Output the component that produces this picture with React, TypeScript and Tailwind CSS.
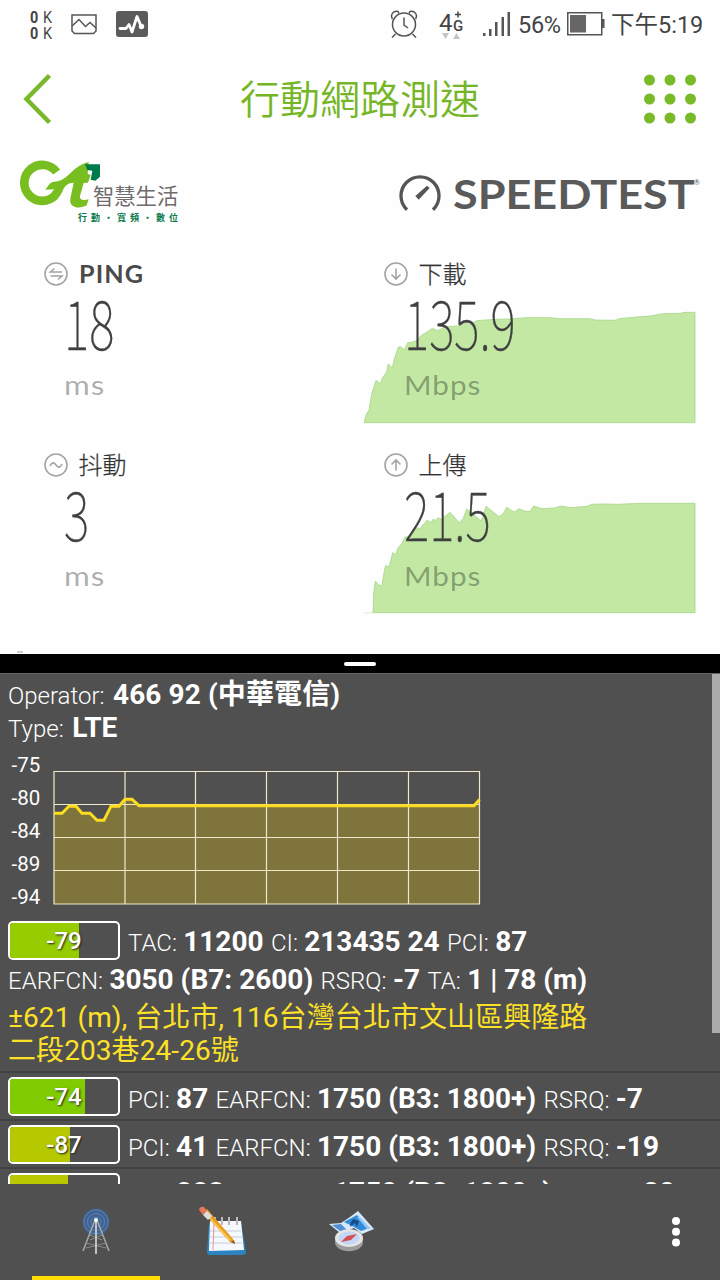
import React from "react";

const roboto = "font-['Roboto','Noto_Sans_CJK_TC',sans-serif]";
const cjk = "font-['Noto_Sans_CJK_TC',sans-serif]";
const lato = "font-['Lato',sans-serif]";

function StatusBar() {
  return (
    <div className={`${roboto} flex h-12 items-center text-[#444]`}>
      <div className="ml-[30px] flex h-[32px] w-[24px] flex-col justify-center pt-[3px] text-[16px] leading-[15.5px]">
        <div className="flex gap-[5px]"><b className="w-[8px] origin-left scale-x-90 font-bold">0</b><span className="origin-left scale-x-90">K</span></div>
        <div className="flex gap-[5px]"><b className="w-[8px] origin-left scale-x-90 font-bold">0</b><span className="origin-left scale-x-90">K</span></div>
      </div>
      <svg className="ml-[16px]" width="28" height="22" viewBox="0 0 28 22" fill="none" stroke="#555" strokeWidth="1.5">
        <path d="M2 2H26V18L23.500 20.500H4.500L2 18Z" />
        <path d="M2 13L9 6.500L15.500 13.500L20 9.500L26 15" />
      </svg>
      <svg className="ml-[18px]" width="32" height="26" viewBox="0 0 32 26">
        <rect x="0" y="0" width="32" height="26" rx="3" fill="#5b5b5b" />
        <path d="M4 17.500H10L13 13.500L16 21L21 5.500L25 15" fill="none" stroke="#fff" strokeWidth="2.800" strokeLinejoin="round" strokeLinecap="round" />
        <circle cx="25.500" cy="15.500" r="2.700" fill="#fff" />
      </svg>
      <svg className="ml-[242px]" width="28" height="30" viewBox="0 0 28 30" fill="none" stroke="#555" strokeWidth="1.500">
        <circle cx="14" cy="15.500" r="11.500" />
        <path d="M14 8.500V16L18 19M2.500 10C0 6 3 1.500 8 2.500L9 4.500M25.500 10C28 6 25 1.500 20 2.500L19 4.500M5.500 25L2 28.500M22.500 25L26 28.500" />
      </svg>
      <div className="ml-[21px] flex h-[32px] w-[26px] flex-col">
        <div className="flex h-[23px]">
          <span className="w-[14px] text-[24px] leading-[30px]">4</span>
          <span className="flex flex-col items-center pt-[3px] text-[15px] leading-[14px]">
            <svg width="8" height="8" viewBox="0 0 8 8" stroke="#444" strokeWidth="1.500" className="shrink-0"><path d="M1 3.500H7M4 .5V6.500" /></svg>
            <b className="font-medium">G</b>
          </span>
        </div>
        <svg width="20" height="7" viewBox="0 0 20 7" className="mt-[2px] ml-[3px]" fill="#c4c4c4"><path d="M0 0H7L3.500 6ZM11 6H18L14.500 0Z" /></svg>
      </div>
      <svg className="ml-[18px]" width="28" height="25" viewBox="0 0 28 25" fill="#555">
        <path d="M0 21H2.500V24H0ZM6 17H8.500V24H6ZM12 10H14.500V24H12ZM18.500 5H21V24H18.500ZM24.500 0H27V24H24.500Z" />
      </svg>
      <span className="ml-[7px] w-[43px] pt-[2px] text-[23.500px] leading-[48px] tracking-[-0.3px]">56%</span>
      <svg className="ml-[6px]" width="38" height="24" viewBox="0 0 38 24">
        <rect x=".75" y=".75" width="34" height="22" fill="none" stroke="#555" strokeWidth="1.500" />
        <path d="M35 7H37.500V16H35Z" fill="#555" />
        <rect x="3" y="3" width="16" height="17.500" fill="#666" />
      </svg>
      <span className="ml-[6px] whitespace-nowrap pt-[2px] text-[23.500px] leading-[48px]">下午5:19</span>
    </div>
  );
}

function Header() {
  return (
    <div className="flex h-[102px] items-center">
      <svg className="ml-[22px]" width="32" height="52" viewBox="0 0 32 52" fill="none" stroke="#78b82a" strokeWidth="4.500">
        <path d="M27.500 2.500L4.500 26L27.500 49.500" />
      </svg>
      <h1 className={`${cjk} -mt-[4px] ml-[186px] w-[240px] whitespace-nowrap text-[40px] font-[350] leading-[60px] text-[#75b626]`}>行動網路測速</h1>
      <svg className="ml-[162px]" width="56" height="54" viewBox="0 0 56 54" fill="#78ba27">
        {[7.5, 28, 48.5].map((x) => [8, 27, 46].map((y) => <circle key={`${x}-${y}`} cx={x} cy={y} r="5.500" />))}
      </svg>
    </div>
  );
}

function Brands() {
  return (
    <div className="flex h-[100px] items-start pt-[10px]">
      <svg className="ml-[18px]" width="84" height="52" viewBox="54 30 252 156" fill="none">
        <path d="M170 66A54 54 0 1 0 166 136" stroke="#78be20" strokeWidth="26" />
        <path d="M136 119L149 101C160 92 175 97 188 88C214 73 224 46 266 36L263 72L272 75L264 98L251 99L240 138C238 150 250 152 266 148L260 166C240 178 206 174 211 146L221 98C204 98 194 108 189 120C184 132 180 138 174 145L155 127L163 118Z" fill="#78be20" />
        <path d="M255 43H300V80L286 92L272 89L277 62L262 60Z" fill="#007a4b" />
      </svg>
      <div className={`${cjk} -ml-[9px] w-[100px] pt-[20px]`}>
        <div className="whitespace-nowrap text-[21.300px] font-normal leading-[30px] text-[#6f6a6b]">智慧生活</div>
        <div className="-ml-[15px] mt-px flex w-[100px] justify-between text-[9px] font-bold leading-[14px] text-[#087a4d]">
          <span>行</span><span>動</span><span>·</span><span>寬</span><span>頻</span><span>·</span><span>數</span><span>位</span>
        </div>
      </div>
      <svg className="ml-[206px] mt-[13px]" width="43" height="38" viewBox="0 0 129 114" fill="none" stroke="#555">
        <path d="M24 110A57 57 0 1 1 102 110" stroke="#555" strokeWidth="10" />
        <path d="M59 80L49 69L84 38L92 45Z" fill="#555" stroke="none" />
      </svg>
      <div className={`${lato} ml-[11px] mt-[10px] flex text-[#5a5a5a]`}>
        <div className="w-[241px]">
          <span className="inline-block origin-left scale-x-[1.110] text-[40.500px] font-bold leading-[48px]">SPEEDTEST</span>
        </div>
        <span className="text-[7px] leading-[24px]">®</span>
      </div>
    </div>
  );
}

type Kind = "ping" | "jitter" | "down" | "up";

const glyphs: Record<Kind, string> = {
  ping: "M18 10H6.500L10.500 6.500M6.500 14H18L14 17.500",
  jitter: "M6 13C8 9 10 9 12 12S16 15 18 11",
  down: "M12 6.500V17M7.500 12.500L12 17L16.500 12.500",
  up: "M12 17.500V7M7.500 11.500L12 7L16.500 11.500",
};

function Metric({ kind, label, value, unit }: { kind: Kind; label: string; value: string; unit: string }) {
  return (
    <div>
      <div className="flex h-[35px] items-center">
        <svg width="24" height="24" viewBox="0 0 24 24" fill="none" stroke="#a3a3a3" strokeWidth="1.600">
          <circle cx="12" cy="12" r="11" />
          <path d={glyphs[kind]} />
        </svg>
        {kind === "ping" ? (
          <span className={`${lato} ml-[11px] origin-left scale-x-105 text-[24px] font-bold leading-[35px] tracking-[1px] text-[#4a4a4a]`}>{label}</span>
        ) : (
          <span className={`${cjk} -mt-[3px] ml-[10.500px] text-[24px] font-light leading-[35px] text-[#333] [-webkit-text-stroke:0.25px_#333]`}>{label}</span>
        )}
      </div>
      <div className={`${cjk} ml-[20px] h-[60px] w-max origin-left scale-x-[0.710] text-[68px] font-thin leading-[60px] text-[#3f3f3f] [-webkit-text-stroke:0.4px_#3f3f3f]`}>{value}</div>
      <div className={`${lato} ml-[20px] mt-[10px] w-max origin-left text-[27.500px] leading-[48px] tracking-[0.900px] text-[#000]/33 ${unit === "ms" ? "scale-x-[1.140]" : "scale-x-[1.080]"}`}>{unit}</div>
    </div>
  );
}

const downPath =
  "M42 518L49 493L57 480L61 455L66 429L78 391L86 397L92 401L97 384L110 366L114 342L127 353L134 323L145 291L152 290L163 299L173 278L185 277L200 272L215 255L231 246L247 235L263 242L275 236L281 230L325 228L345 219L362 224L380 212L435 208L480 207L528 203L600 203L630 206L720 206L735 210L795 211L808 206L850 202L900 198L940 191L990 190L1005 187L1035 187V518Z";
const upPath =
  "M69 518L71 460L76 423L85 434L96 438L99 415L105 382L108 376L117 382L128 338L137 344L144 323L155 312L165 291L175 290L202 264L210 266L223 250L232 240L243 248L249 238L257 241L264 233L274 238L300 217L328 248L340 235L350 207L370 222L393 243L400 227L408 199L447 230L460 221L470 202L492 216L508 206L525 214L540 214L551 198L576 206L613 204L634 198L660 203L712 199L725 193L765 192L805 193L870 190H1035V518Z";

function AreaChart({ d, upload = false }: { d: string; upload?: boolean }) {
  return (
    <svg width="370" height="190" viewBox="0 0 1110 570" className="col-start-1 row-start-1">
      {upload && <path d="M42 519H70" stroke="#d9efc9" strokeWidth="3" />}
      <path d={d} fill="#c2e8a3" stroke="#a8d78c" strokeWidth="2.500" />
    </svg>
  );
}

function Results() {
  return (
    <div className="grid grid-cols-[350px_370px] grid-rows-[190px_213px]">
      <div className="pt-[6px] pl-[44px]"><Metric kind="ping" label="PING" value="18" unit="ms" /></div>
      <div className="grid items-start">
        <AreaChart d={downPath} />
        <div className="z-10 col-start-1 row-start-1 pt-[6px] pl-[34px]"><Metric kind="down" label="下載" value="135.9" unit="Mbps" /></div>
      </div>
      <div className="pt-[7px] pl-[44px]"><Metric kind="jitter" label="抖動" value="3" unit="ms" /></div>
      <div className="grid items-start">
        <AreaChart d={upPath} upload />
        <div className="z-10 col-start-1 row-start-1 pt-[7px] pl-[34px]"><Metric kind="up" label="上傳" value="21.5" unit="Mbps" /></div>
      </div>
    </div>
  );
}

function Field({ name, wide = false, children }: { name: string; wide?: boolean; children: React.ReactNode }) {
  return (
    <>
      <span className="text-[24px] font-light leading-none">{name}:</span>
      <b className={wide ? "ml-[1.500px] font-bold" : "-ml-[0.700px] font-bold"}> {children}</b>
      <span className="mr-[1.500px] text-[24px] font-light leading-none"> </span>
    </>
  );
}

function Badge({ value, fill, color }: { value: string; fill: number; color: string }) {
  return (
    <div className="grid h-[39px] w-[112px] shrink-0 overflow-hidden rounded-[5px] border-2 border-white">
      <div className="col-start-1 row-start-1 h-full" style={{ width: fill, background: color }} />
      <span className="col-start-1 row-start-1 text-center text-[24px] font-medium leading-[37px] [text-shadow:1px_1px_2px_#222]">{value}</span>
    </div>
  );
}

function SignalChart() {
  return (
    <div className="flex h-[170px]">
      <div className="w-[50px] pt-[5px] pl-[11.500px] text-[20.500px] leading-[33.100px]">
        {["-75", "-80", "-84", "-89", "-94"].map((v) => <div key={v}>{v}</div>)}
      </div>
      <svg width="434" height="166" viewBox="50 744 434 166" fill="none">
        <path d="M54 813.200H62L69 806.200H76L82 813.200H90L97 820.200H104L111 806.200H119L125 799.200H132L139 805.700H474L479.500 799.500V904H54Z" fill="#7e743c" />
        <path d="M54 771.500H479.500V904H54ZM54 804.500H479.500M54 837.500H479.500M54 870.500H479.500M125 771.500V904M195.500 771.500V904M266.500 771.500V904M337.500 771.500V904M408.500 771.500V904" stroke="#eee9c8" strokeWidth="1.200" />
        <path d="M54 813.200H62L69 806.200H76L82 813.200H90L97 820.200H104L111 806.200H119L125 799.200H132L139 805.700H474L479.500 799.500" stroke="#fddc1f" strokeWidth="3" />
      </svg>
    </div>
  );
}

const neighbours = [
  { dbm: "-74", fill: 75, color: "#80cc00", pci: "87", rsrq: "-7" },
  { dbm: "-87", fill: 60, color: "#b5c800", pci: "41", rsrq: "-19" },
  { dbm: "-88", fill: 58, color: "#b9c800", pci: "283", rsrq: "-20" },
];

function CellInfo() {
  return (
    <div className={`${roboto} relative h-[511px] overflow-hidden border-t border-[#656565] bg-[#505050] text-white`}>
      <div className="whitespace-nowrap pt-[4px] text-[28px] leading-[33px]">
        <div className="h-[33px] pl-2"><Field name="Operator" wide><span className="tracking-[0.100px]">466 92 (中華電信)</span></Field></div>
        <div className="h-[33px] pl-2"><Field name="Type" wide>LTE</Field></div>
        <SignalChart />
        <div className="mt-[7px] flex h-[40px] gap-2 pl-2">
          <Badge value="-79" fill={69} color="#96cc00" />
          <div className="leading-[41px]"><Field name="TAC">11200</Field><Field name="CI">213435 24</Field><Field name="PCI">87</Field></div>
        </div>
        <div className="mt-[2px] h-[33px] pl-2"><Field name="EARFCN">3050 (B7: 2600)</Field><Field name="RSRQ">-7</Field><Field name="TA">1 | 78 (m)</Field></div>
        <div className="mt-[5px] h-[66px] pl-2 tracking-[0.080px] text-[#fde127]">±621 (m), 台北市, 116台灣台北市文山區興隆路<br />二段203巷24-26號</div>
        <div className="mt-[4px]">
          {neighbours.map((n, i) => (
            <div key={n.dbm} className="flex h-[48px] gap-2 border-t-2 border-[#424242] pt-[4px] pl-2">
              <Badge value={n.dbm} fill={n.fill} color={n.color} />
              <div className={i === 2 ? "-mt-px leading-[42px]" : "leading-[43px]"}><Field name="PCI">{n.pci}</Field><Field name="EARFCN">1750 (B3: 1800+)</Field><Field name="RSRQ">{n.rsrq}</Field></div>
            </div>
          ))}
        </div>
      </div>
      <div className="absolute top-0 right-0 h-[359px] w-2 bg-[#ababab]" />
    </div>
  );
}

function TabBar() {
  return (
    <div className="flex h-[96px] bg-[#505050]">
      <div className="ml-[32px] flex w-[128px] flex-col items-center justify-between pt-[21px]">
        <svg width="32" height="50" viewBox="0 0 32 50" fill="none">
          <circle cx="16" cy="17" r="13.500" fill="#40628f" />
          <g stroke="#5a82b8" strokeWidth="1"><circle cx="16" cy="17" r="12" /><circle cx="16" cy="17" r="8.500" /><circle cx="16" cy="17" r="5" /></g>
          <path d="M15 15L3 46M17 15L29 46" stroke="#a8a8a8" strokeWidth="1.500" />
          <path d="M6 38L26 43M26 38L6 43M10 30L22 35M22 30L10 35" stroke="#8a8a8a" strokeWidth="1" />
          <path d="M16 15V49" stroke="#ccc" strokeWidth="1.800" />
          <circle cx="16" cy="15" r="2" fill="#fff" />
        </svg>
        <div className="h-1 w-full bg-[#ffdc00]" />
      </div>
      <div className="flex w-[128px] justify-center pt-[22px]">
        <svg width="52" height="52" viewBox="0 0 52 52">
          <path d="M11 17H43L48 46Q48 49 44 49H12Q9 49 9 46Z" fill="#2c83c1" />
          <path d="M12 15L43 15L46 44L11 45Z" fill="#f5f8fd" />
          <path d="M12 25H43M12 31H44M12 37H44" stroke="#c4cedc" />
          <path d="M16 17L15 44" stroke="#f29090" />
          <path d="M17 11V19M24 11V19M31 11V19M39 11V19" stroke="#bbb" strokeWidth="2" />
          <path d="M5 6L9 3L35 33L37 38L32 36Z" fill="#e99c25" />
          <path d="M8 8L32 34" stroke="#ffc84a" strokeWidth="1.800" />
          <path d="M1 4Q2 0 6 1L9 5L5 9Z" fill="#e4785d" />
          <path d="M5 9L9 5L14 10L10 14Z" fill="#ddd" />
          <path d="M33 36L36 34L37 38Z" fill="#8a552c" />
        </svg>
      </div>
      <div className="flex w-[128px] justify-center pt-[25px]">
        <svg width="50" height="50" viewBox="0 0 50 50">
          <path d="M2 15L14 14L23 8L31 2L47 20L35 25L27 19L13 24Z" fill="#d6e9fb" />
          <path d="M5 16L14 15L22 23L13 22Z" fill="#528fd5" />
          <path d="M17 13L30 6L42 19L34 22L27 18Z" fill="#338cd8" />
          <path d="M33 8L44 20L40 20L30 8Z" fill="#98c6f1" />
          <path d="M26 10L32 12L30 18L28 14L23 18L24 13Z" fill="#174e87" />
          <path d="M8 29V34C10 45 34 45 36 34V29Z" fill="#9c9c9c" />
          <ellipse cx="22" cy="29" rx="14" ry="9" fill="#e5e5e5" />
          <ellipse cx="22" cy="29" rx="10.500" ry="6.500" fill="#c2d7f5" />
          <path d="M14 33L20 27L30 25L24 31Z" fill="#d54e54" />
        </svg>
      </div>
      <svg className="mt-[32px] ml-[254px]" width="12" height="32" viewBox="0 0 12 32" fill="#fff">
        <circle cx="6" cy="5" r="4" /><circle cx="6" cy="15.800" r="4" /><circle cx="6" cy="26.500" r="4" />
      </svg>
    </div>
  );
}

export default function App() {
  return (
    <div className="h-[1280px] w-[720px] overflow-hidden bg-black">
      <div className="h-[654px] overflow-hidden bg-[#fefefe]">
        <StatusBar />
        <Header />
        <Brands />
        <Results />
        <div className="-mt-[2px] ml-[17px] h-[2px] w-[6px] bg-[#ccc]" />
      </div>
      <div className="flex h-[19px] justify-center bg-black pt-[8px]">
        <div className="h-1 w-8 rounded-sm bg-white" />
      </div>
      <CellInfo />
      <TabBar />
    </div>
  );
}
